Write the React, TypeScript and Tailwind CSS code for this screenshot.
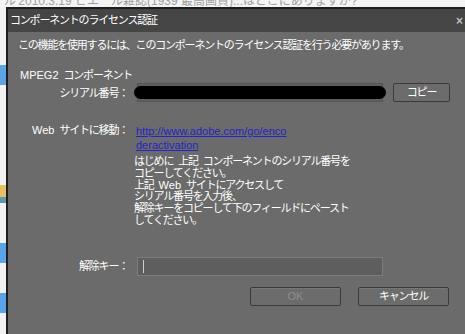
import React from "react";

const jp = { fontFamily: '"Liberation Sans", "Noto Sans CJK JP", sans-serif' };

function L({ children }: { children: React.ReactNode }) {
  return <span className="tracking-[0px]">{children}</span>;
}

function S() {
  return <span className="inline-block w-[5px]" />;
}

function Btn({ children, disabled }: { children: React.ReactNode; disabled?: boolean }) {
  return (
    <div
      className={
        "flex h-[19px] w-[91px] items-center justify-center rounded-[2px] border border-[#3a3a3a] bg-[#6c6c6c] shadow-[inset_0_1px_0_#777]" +
        (disabled ? " text-[#8e8e8e]" : " text-white")
      }
    >
      {children}
    </div>
  );
}

export default function App() {
  return (
    <div
      className="flex h-[334px] w-[465px] flex-col overflow-hidden bg-[#f4f4f4] text-[11px] tracking-[-1.2px]"
      style={jp}
    >
      <div className="h-[7px] overflow-hidden whitespace-nowrap pl-[4px] text-[12px] leading-[8px] tracking-[0px] text-[#a0a0a0]">
        <div className="-translate-y-[3px]">ル'2010.3.19 ピエール雑誌(1939 最高画質)...はどこにありますか?</div>
      </div>
      <div className="flex flex-1">
        <div className="flex w-[6px] flex-col bg-[#f2f2f2]">
          <div className="h-[58px]" />
          <div className="h-[20px] bg-[#5aa5e8]" />
          <div className="h-[100px]" />
          <div className="h-[12px] bg-[#e8c060]" />
          <div className="h-[6px] bg-[#5a9bb0]" />
          <div className="h-[40px]" />
          <div className="h-[20px] bg-[#5aa5e8]" />
          <div className="h-[30px]" />
          <div className="h-[20px] bg-[#5aa5e8]" />
        </div>
        <div className="flex flex-1 flex-col border-l-[2px] border-t-[2px] border-[#1e1e1e] bg-[#6b6b6b]">
          <div className="flex h-[23px] items-center justify-between bg-[#454545] pl-[2px] pr-[2px] text-white">
            <span>コンポーネントのライセンス認証</span>
            <span className="text-[12px] font-bold leading-none tracking-[0px] text-[#bdbdbd]">×</span>
          </div>
          <div className="flex flex-col pl-[10px] pt-[6px] text-white">
            <div className="leading-[14px]">この機能を使用するには、このコンポーネントのライセンス認証を行う必要があります。</div>
            <div className="mt-[16px] pl-[2px] leading-[14px]">
              <L>MPEG2</L>
              <S />
              コンポーネント
            </div>
            <div className="mt-[1px] flex items-center">
              <div className="w-[110px] text-right leading-[14px]">シリアル番号：</div>
              <div className="relative ml-[9px] h-[19px] w-[246px] border border-[#555] bg-[#5e5e5e]">
                <div className="absolute left-[-4px] top-[2px] h-[13px] w-[252px] rounded-[8px] bg-black" />
              </div>
              <div className="ml-[10px] flex h-[19px] w-[57px] items-center justify-center rounded-[2px] border border-[#3a3a3a] bg-[#6c6c6c] text-white">
                コピー
              </div>
            </div>
            <div className="mt-[22px] flex items-start">
              <div className="w-[110px] text-right leading-[13px]">
                <L>Web</L>
                <S />
                サイトに移動：
              </div>
              <div className="ml-[8px] flex flex-col">
                <div className="leading-[14px] tracking-[0px] text-[#2424c8] underline">http://www.adobe.com/go/enco</div>
                <div className="leading-[14px] tracking-[0px] text-[#2424c8] underline">deractivation</div>
                <div className="ml-[-2px] mt-[4px] leading-[11.8px]">
                  はじめに
                  <S />
                  上記
                  <S />
                  コンポーネントのシリアル番号を
                  <br />
                  コピーしてください。
                  <br />
                  上記
                  <S />
                  <L>Web</L>
                  <S />
                  サイトにアクセスして
                  <br />
                  シリアル番号を入力後、
                  <br />
                  解除キーをコピーして下のフィールドにペースト
                  <br />
                  してください。
                </div>
              </div>
            </div>
            <div className="mt-[30px] flex items-center">
              <div className="w-[110px] text-right">解除キー：</div>
              <div className="ml-[9px] flex h-[19px] w-[246px] items-center border border-[#7c7c7c] bg-[#5e5e5e] pl-[5px]">
                <div className="h-[13px] w-px bg-[#cfcfcf]" />
              </div>
            </div>
            <div className="mt-[11px] flex justify-end gap-[17px] pr-[16px]">
              <Btn disabled>
                <L>OK</L>
              </Btn>
              <Btn>キャンセル</Btn>
            </div>
          </div>
        </div>
      </div>
    </div>
  );
}
